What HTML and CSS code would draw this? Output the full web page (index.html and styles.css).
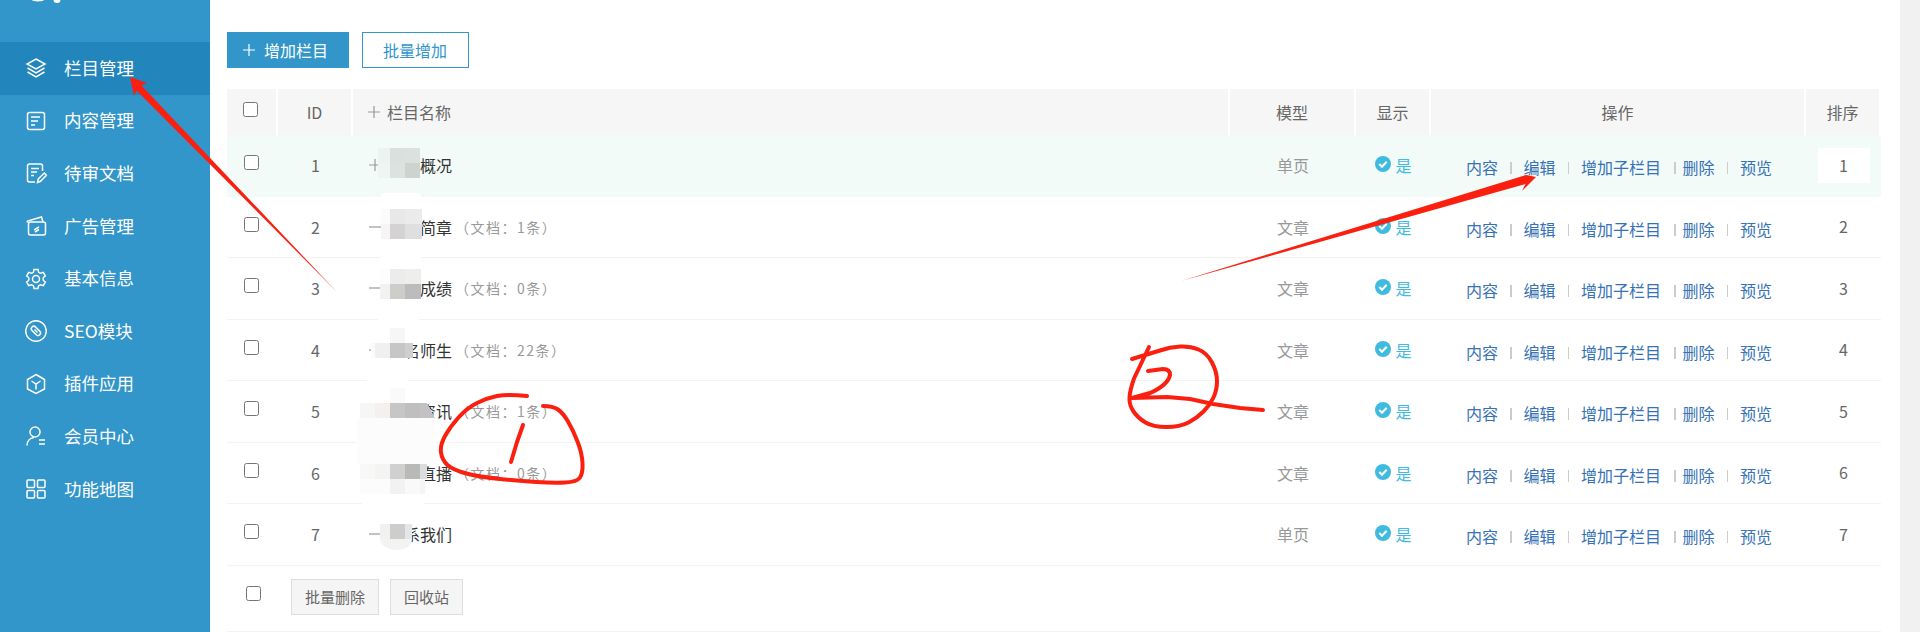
FILE: index.html
```html
<!DOCTYPE html>
<html lang="zh-CN">

<head>
  <meta charset="UTF-8">
  <title>栏目管理</title>
  <link rel="stylesheet" href="styles.css">
</head>

<body>
  <div class="page">
    <aside class="sidebar">
      <a class="nav-item active" href="#">
        <svg class="nav-icon" viewBox="0 0 22 22"><path d="M11 2l9 5-9 5-9-5z"/><path d="M2.5 11l8.500 4.800 8.500-4.800"/><path d="M2.500 15l8.500 4.800 8.500-4.800"/></svg>
        <span>栏目管理</span>
      </a>
      <a class="nav-item" href="#">
        <svg class="nav-icon" viewBox="0 0 22 22"><rect x="2.500" y="2.500" width="17" height="17" rx="2"/><path d="M6 7h9M6 11h7M6 15h4"/></svg>
        <span>内容管理</span>
      </a>
      <a class="nav-item" href="#">
        <svg class="nav-icon" viewBox="0 0 22 22"><path d="M10 20H4.500a2 2 0 0 1-2-2V4a2 2 0 0 1 2-2h11a2 2 0 0 1 2 2v5"/><path d="M6 6.500h8M6 10h6M6 13.500h3"/><path d="M12.500 20.500l.8-3.500 6-6 2.200 2.300-6 6z"/></svg>
        <span>待审文档</span>
      </a>
      <a class="nav-item" href="#">
        <svg class="nav-icon" viewBox="0 0 22 22"><rect x="3.500" y="7" width="17" height="13" rx="2"/><path d="M2 7.500L2.500 6 16.500 2l1.500 5"/><path d="M9 15l5-3M10 17l4-2.500"/></svg>
        <span>广告管理</span>
      </a>
      <a class="nav-item" href="#">
        <svg class="nav-icon" viewBox="0 0 22 22"><path d="M9 1.500h4l.6 2.800 2 1 2.700-.9 2 3.500-2.100 1.900v2.400l2.100 1.900-2 3.500-2.700-.9-2 1-.6 2.800H9l-.6-2.800-2-1-2.700.9-2-3.500 2.100-1.900V9.800L1.700 7.900l2-3.500 2.700.9 2-1z"/><circle cx="11" cy="11" r="3.500"/></svg>
        <span>基本信息</span>
      </a>
      <a class="nav-item" href="#">
        <svg class="nav-icon" viewBox="0 0 22 22"><circle cx="11" cy="11" r="10.300"/><path d="M7 7a2.500 2.500 0 0 1 3.500 0l4.500 4.500a2.500 2.500 0 0 1-3.500 3.500L7 10.500a2.500 2.500 0 0 1 0-3.500z"/><path d="M9.500 9.500l3 3"/></svg>
        <span>SEO模块</span>
      </a>
      <a class="nav-item" href="#">
        <svg class="nav-icon" viewBox="0 0 22 22"><path d="M11 1.500l8.500 5v9.500L11 20.500 2.500 16V6.500z"/><path d="M6.500 8l4.500 3 4.500-3M11 11v5.500"/></svg>
        <span>插件应用</span>
      </a>
      <a class="nav-item" href="#">
        <svg class="nav-icon" viewBox="0 0 22 22"><circle cx="10" cy="7" r="5"/><path d="M2 20.500c0-4.500 3-7.500 7-8"/><path d="M14 15h6M14 19h6"/></svg>
        <span>会员中心</span>
      </a>
      <a class="nav-item" href="#">
        <svg class="nav-icon" viewBox="0 0 22 22"><rect x="2" y="2" width="7.500" height="7.500" rx="1"/><rect x="12.500" y="2" width="7.500" height="7.500" rx="1"/><rect x="2" y="12.500" width="7.500" height="7.500" rx="1"/><rect x="12.500" y="12.500" width="7.500" height="7.500" rx="1"/></svg>
        <span>功能地图</span>
      </a>
    </aside>

    <main class="main">
      <div class="toolbar">
        <a class="btn btn-primary" href="#">
          <svg class="mark" viewBox="0 0 12 12"><path d="M0 6h12M6 0v12"/></svg>
          <span>增加栏目</span>
        </a>
        <a class="btn btn-outline" href="#">批量增加</a>
      </div>

      <table class="cat-table">
        <colgroup>
          <col class="col-check">
          <col class="col-id">
          <col>
          <col class="col-model">
          <col class="col-show">
          <col class="col-action">
          <col class="col-sort">
        </colgroup>
        <thead>
          <tr>
            <th><input class="head-check" type="checkbox"></th>
            <th>ID</th>
            <th class="name-head"><div class="name-cell"><svg class="mark" viewBox="0 0 12 12"><path d="M0 6h12M6 0v12"/></svg><span class="name-head-text">栏目名称</span></div></th>
            <th>模型</th>
            <th>显示</th>
            <th>操作</th>
            <th>排序</th>
          </tr>
        </thead>
        <tbody>
          <tr class="current">
            <td><input type="checkbox"></td>
            <td>1</td>
            <td class="name"><div class="name-cell"><svg class="mark" viewBox="0 0 12 12"><path d="M0 6h12M6 0v12"/></svg><span class="title">概况</span></div></td>
            <td class="model">单页</td>
            <td><span class="show"><svg class="check" viewBox="0 0 16 16"><circle cx="8" cy="8" r="8"/><path d="M4.300 8l2.700 2.800 4.700-5"/></svg>是</span></td>
            <td class="actions"><a href="#">内容</a><i class="sep"></i><a href="#">编辑</a><i class="sep"></i><a href="#">增加子栏目</a><i class="sep sep-tight"></i><a href="#">删除</a><i class="sep"></i><a href="#">预览</a></td>
            <td><span class="sort">1</span></td>
          </tr>
          <tr>
            <td><input type="checkbox"></td>
            <td>2</td>
            <td class="name"><div class="name-cell"><svg class="mark" viewBox="0 0 12 12"><path d="M0 6h12"/></svg><span class="title">简章</span><span class="count">（文档：1条）</span></div></td>
            <td class="model">文章</td>
            <td><span class="show"><svg class="check" viewBox="0 0 16 16"><circle cx="8" cy="8" r="8"/><path d="M4.300 8l2.700 2.800 4.700-5"/></svg>是</span></td>
            <td class="actions"><a href="#">内容</a><i class="sep"></i><a href="#">编辑</a><i class="sep"></i><a href="#">增加子栏目</a><i class="sep sep-tight"></i><a href="#">删除</a><i class="sep"></i><a href="#">预览</a></td>
            <td><span class="sort">2</span></td>
          </tr>
          <tr>
            <td><input type="checkbox"></td>
            <td>3</td>
            <td class="name"><div class="name-cell"><svg class="mark" viewBox="0 0 12 12"><path d="M0 6h12"/></svg><span class="title">成绩</span><span class="count">（文档：0条）</span></div></td>
            <td class="model">文章</td>
            <td><span class="show"><svg class="check" viewBox="0 0 16 16"><circle cx="8" cy="8" r="8"/><path d="M4.300 8l2.700 2.800 4.700-5"/></svg>是</span></td>
            <td class="actions"><a href="#">内容</a><i class="sep"></i><a href="#">编辑</a><i class="sep"></i><a href="#">增加子栏目</a><i class="sep sep-tight"></i><a href="#">删除</a><i class="sep"></i><a href="#">预览</a></td>
            <td><span class="sort">3</span></td>
          </tr>
          <tr>
            <td><input type="checkbox"></td>
            <td>4</td>
            <td class="name"><div class="name-cell"><svg class="mark" viewBox="0 0 12 12"><path d="M0 6h12"/></svg><span class="title">名师生</span><span class="count">（文档：22条）</span></div></td>
            <td class="model">文章</td>
            <td><span class="show"><svg class="check" viewBox="0 0 16 16"><circle cx="8" cy="8" r="8"/><path d="M4.300 8l2.700 2.800 4.700-5"/></svg>是</span></td>
            <td class="actions"><a href="#">内容</a><i class="sep"></i><a href="#">编辑</a><i class="sep"></i><a href="#">增加子栏目</a><i class="sep sep-tight"></i><a href="#">删除</a><i class="sep"></i><a href="#">预览</a></td>
            <td><span class="sort">4</span></td>
          </tr>
          <tr>
            <td><input type="checkbox"></td>
            <td>5</td>
            <td class="name"><div class="name-cell"><svg class="mark" viewBox="0 0 12 12"><path d="M0 6h12"/></svg><span class="title">资讯</span><span class="count">（文档：1条）</span></div></td>
            <td class="model">文章</td>
            <td><span class="show"><svg class="check" viewBox="0 0 16 16"><circle cx="8" cy="8" r="8"/><path d="M4.300 8l2.700 2.800 4.700-5"/></svg>是</span></td>
            <td class="actions"><a href="#">内容</a><i class="sep"></i><a href="#">编辑</a><i class="sep"></i><a href="#">增加子栏目</a><i class="sep sep-tight"></i><a href="#">删除</a><i class="sep"></i><a href="#">预览</a></td>
            <td><span class="sort">5</span></td>
          </tr>
          <tr>
            <td><input type="checkbox"></td>
            <td>6</td>
            <td class="name"><div class="name-cell"><svg class="mark" viewBox="0 0 12 12"><path d="M0 6h12"/></svg><span class="title">直播</span><span class="count">（文档：0条）</span></div></td>
            <td class="model">文章</td>
            <td><span class="show"><svg class="check" viewBox="0 0 16 16"><circle cx="8" cy="8" r="8"/><path d="M4.300 8l2.700 2.800 4.700-5"/></svg>是</span></td>
            <td class="actions"><a href="#">内容</a><i class="sep"></i><a href="#">编辑</a><i class="sep"></i><a href="#">增加子栏目</a><i class="sep sep-tight"></i><a href="#">删除</a><i class="sep"></i><a href="#">预览</a></td>
            <td><span class="sort">6</span></td>
          </tr>
          <tr>
            <td><input type="checkbox"></td>
            <td>7</td>
            <td class="name"><div class="name-cell"><svg class="mark" viewBox="0 0 12 12"><path d="M0 6h12"/></svg><span class="title">系我们</span></div></td>
            <td class="model">单页</td>
            <td><span class="show"><svg class="check" viewBox="0 0 16 16"><circle cx="8" cy="8" r="8"/><path d="M4.300 8l2.700 2.800 4.700-5"/></svg>是</span></td>
            <td class="actions"><a href="#">内容</a><i class="sep"></i><a href="#">编辑</a><i class="sep"></i><a href="#">增加子栏目</a><i class="sep sep-tight"></i><a href="#">删除</a><i class="sep"></i><a href="#">预览</a></td>
            <td><span class="sort">7</span></td>
          </tr>
        </tbody>
      </table>

      <div class="table-foot">
        <input type="checkbox">
        <a class="btn-gray" href="#">批量删除</a>
        <a class="btn-gray" href="#">回收站</a>
      </div>
    </main>

    <div class="scroll-track"></div>
  </div>

  <!-- mosaic and red pen marks drawn on top of the screenshot -->
  <svg class="overlay" width="1920" height="632" viewBox="0 0 1920 632">
    <g class="logo-scrap">
      <ellipse cx="38" cy="0" rx="6" ry="1.500"/>
      <ellipse cx="57" cy="0" rx="3.500" ry="3"/>
    </g>
    <g>
      <rect x="378" y="148" width="12" height="15" fill="#ecf4f2"/>
      <rect x="390" y="148" width="15" height="15" fill="#d9e0de"/>
      <rect x="405" y="148" width="15" height="15" fill="#dae1df"/>
      <rect x="378" y="163" width="12" height="15" fill="#eff5f3"/>
      <rect x="390" y="163" width="15" height="15" fill="#dbe3e1"/>
      <rect x="405" y="163" width="15" height="15" fill="#cdd4d0"/>

      <rect x="381" y="193" width="40" height="16" fill="#fff"/>
      <rect x="381" y="209" width="9" height="15" fill="#fcfbfa"/>
      <rect x="390" y="209" width="15" height="15" fill="#e9e8e8"/>
      <rect x="405" y="209" width="17" height="15" fill="#ebebeb"/>
      <rect x="381" y="224" width="9" height="15" fill="#f6f5f3"/>
      <rect x="390" y="224" width="15" height="15" fill="#d4d2d3"/>
      <rect x="405" y="224" width="17" height="15" fill="#dfdfe0"/>

      <rect x="381" y="254" width="40" height="15" fill="#fff"/>
      <rect x="380" y="269" width="10" height="15" fill="#fdfdfd"/>
      <rect x="390" y="269" width="15" height="15" fill="#ececec"/>
      <rect x="405" y="269" width="16" height="15" fill="#eeeeec"/>
      <rect x="380" y="284" width="10" height="15" fill="#f2f2f2"/>
      <rect x="390" y="284" width="15" height="15" fill="#cdcdc9"/>
      <rect x="405" y="284" width="16" height="15" fill="#bcbcbe"/>

      <rect x="378" y="315" width="41" height="13" fill="#fff"/>
      <rect x="390" y="328" width="15" height="15" fill="#f6f6f6"/>
      <rect x="375" y="328" width="15" height="15" fill="#fff"/>
      <rect x="405" y="328" width="8" height="15" fill="#fff"/>
      <rect x="371" y="343" width="4" height="15" fill="#fbfbfb"/>
      <rect x="375" y="343" width="15" height="15" fill="#f2f0ee"/>
      <rect x="390" y="343" width="15" height="15" fill="#c6c6c6"/>
      <rect x="405" y="343" width="8" height="15" fill="#cfcfcf"/>

      <rect x="367" y="373" width="41" height="30" fill="#fff"/>
      <rect x="390" y="388" width="15" height="15" fill="#fafafa"/>
      <rect x="360" y="403" width="15" height="15" fill="#f6f6f4"/>
      <rect x="375" y="403" width="15" height="15" fill="#f4f0ee"/>
      <rect x="390" y="403" width="15" height="15" fill="#c6c6c6"/>
      <rect x="405" y="403" width="15" height="15" fill="#bfbfbf"/>
      <path d="M420 403h7l8 15h-15z" fill="#c3c1c3"/>

      <rect x="357" y="418" width="78" height="46" fill="#fcfcfc"/>
      <rect x="360" y="464" width="15" height="15" fill="#f8f8f8"/>
      <rect x="375" y="464" width="15" height="15" fill="#f4f4f2"/>
      <rect x="390" y="464" width="15" height="15" fill="#cfd0cf"/>
      <rect x="405" y="464" width="15" height="15" fill="#b9b9b7"/>
      <rect x="420" y="464" width="7" height="15" fill="#dcdcdc"/>
      <rect x="360" y="479" width="30" height="15" fill="#fcfcfc"/>
      <rect x="390" y="479" width="15" height="15" fill="#f2f2f2"/>
      <rect x="405" y="479" width="15" height="15" fill="#f9f9f9"/>
      <rect x="420" y="479" width="5" height="15" fill="#f5f5f5"/>
      <rect x="362" y="494" width="62" height="14" fill="#fff"/>

      <rect x="380" y="524" width="10" height="15" fill="#f1f1ef"/>
      <rect x="390" y="524" width="15" height="15" fill="#cdcdcd"/>
      <rect x="405" y="524" width="7" height="15" fill="#e6e6e6"/>
      <path d="M380 539h32c0 7-7 11-15 11s-17-4-17-11z" fill="#f3f3f1"/>
    </g>
    <g class="pen-fill">
      <path d="M130 77l17 6-5.500 2.500L337 292 136.500 90.500 134 96z"/>
      <path d="M1181 281l345-106-9-2 19 4-14 14 3.500-7z"/>
    </g>
    <g class="pen">
      <path d="M527 396Q507 394 497 396Q487 398 477 403Q467 408 458.500 417.500Q450 427 445 436Q440 445 441 452.500Q442 460 447.500 465Q453 470 466.500 473.500Q480 477 500 479Q520 481 536.500 482Q553 483 565 482.500Q577 482 580 477.500Q583 473 582.500 463Q582 453 577.500 441.500Q573 430 568 421.500Q563 413 558 409.500Q553 406 543 406"/>
      <path d="M523 425l-6 17-6 20"/>
      <path d="M1132 359L1160 350.500Q1170 347 1180 346.500Q1190 346 1198.500 349.500Q1207 353 1212 362.500Q1217 372 1217 381Q1217 390 1213.500 397.500Q1210 405 1203.500 411.500Q1197 418 1188.500 422.500Q1180 427 1166.500 427Q1153 427 1145.500 422.500Q1138 418 1133.500 411.500Q1129 405 1129.500 397.500Q1130 390 1134 378.500L1149 347"/>
      <path d="M1148 371l15-2Q1170 369 1170 375Q1168 385 1150 393l-18 5 35-1 23 2 23 5 27 4 23 2"/>
    </g>
  </svg>
</body>

</html>
```

FILE: styles.css
```css
* {
  padding: 0;
  margin: 0;
  box-sizing: border-box;
}

body {
  height: 632px;
  overflow: hidden;
  position: relative;
  background-color: #fff;
  font-family: "Noto Sans CJK SC", "Liberation Sans", sans-serif;
  font-size: 16px;
  color: #666;
}

a {
  text-decoration: none;
}

.page {
  display: flex;
  height: 632px;
}

/* 左侧菜单 */
.sidebar {
  width: 210px;
  flex-shrink: 0;
  padding-top: 42px;
  background-color: #3296ca;
}

.nav-item {
  height: 52.6px;
  padding-left: 25px;
  display: flex;
  align-items: center;
  color: #fff;
  font-size: 17.5px;
}

.nav-item span {
  padding-bottom: 2px;
}

.nav-item.active {
  background-color: #2285bb;
}

.nav-icon {
  width: 22px;
  height: 22px;
  margin-right: 17px;
  fill: none;
  stroke: #fff;
  stroke-width: 1.5;
}

/* 主体 */
.main {
  flex: 1;
  padding: 32px 19px 0 17px;
}

.scroll-track {
  width: 20px;
  flex-shrink: 0;
  background-color: #f1f1f1;
}

.toolbar {
  display: flex;
  gap: 13px;
  margin-bottom: 21px;
}

.btn {
  height: 36px;
  display: flex;
  align-items: center;
}

.btn-primary {
  width: 122px;
  padding-left: 16px;
  background-color: #3296ca;
  color: #fff;
}

.btn-primary .mark {
  stroke: #fff;
  margin-right: 9px;
}

.btn-outline {
  width: 107px;
  padding-left: 20px;
  border: 1px solid #3296ca;
  color: #3296ca;
}

.mark {
  width: 12px;
  height: 12px;
  flex-shrink: 0;
  fill: none;
  stroke: #999;
  stroke-width: 1.2;
}

/* 表格 */
.cat-table {
  width: 1654px;
  table-layout: fixed;
  border-collapse: separate;
  border-spacing: 0;
}

.col-check {
  width: 51px;
}

.col-id {
  width: 75px;
}

.col-model {
  width: 126px;
}

.col-show {
  width: 75px;
}

.col-action {
  width: 375px;
}

.col-sort {
  width: 75px;
}

.cat-table th {
  height: 46px;
  background-color: #f6f6f6;
  border-right: 2px solid #fff;
  font-weight: normal;
  color: #666;
}

.cat-table td {
  height: 61.5px;
  border-bottom: 1px solid #f3f3f3;
  text-align: center;
}

.cat-table input {
  display: block;
  width: 15px;
  height: 15px;
  margin: 0 0 5px 17px;
}

.cat-table .head-check {
  margin-left: 16px;
}

.current td {
  background-color: #f3fbf8;
  border-bottom-color: #f3fbf8;
}

.name-head {
  padding-left: 15px;
}

.cat-table .name {
  padding-left: 16px;
}

.name-cell {
  display: flex;
  align-items: center;
  text-align: left;
}

.name-head-text {
  margin-left: 7px;
}

.title {
  width: 64px;
  margin-left: 7px;
  text-align: right;
  color: #333;
}

.count {
  margin-left: 3px;
  font-size: 14px;
  letter-spacing: 1.5px;
  color: #999;
}

.cat-table .model {
  color: #999;
}

.show {
  display: inline-flex;
  align-items: center;
  gap: 4px;
  color: #3fbbe0;
}

.check {
  width: 16px;
  height: 16px;
  margin-top: -2px;
}

.check circle {
  fill: #3fbbe0;
}

.check path {
  fill: none;
  stroke: #fff;
  stroke-width: 2;
}

.cat-table .actions {
  padding: 4px 0 0 35px;
  text-align: left;
  white-space: nowrap;
}

.actions a {
  color: #3672b5;
}

.sep {
  display: inline-block;
  width: 1.5px;
  height: 12px;
  margin: 0 12px;
  background-color: #ccc;
}

.sep-tight {
  margin: 0 7px 0 13px;
}

.sort {
  display: inline-block;
  width: 52px;
  height: 35px;
  line-height: 35px;
}

.current .sort {
  background-color: #fff;
}

.table-foot {
  height: 66px;
  padding: 13px 0 0 19px;
  display: flex;
  align-items: flex-start;
  border-bottom: 1px solid #f3f3f3;
}

.table-foot input {
  width: 15px;
  height: 15px;
  margin: 7px 30px 0 0;
}

.btn-gray {
  height: 36px;
  line-height: 34px;
  padding: 0 13px;
  margin-right: 11px;
  background-color: #f5f5f5;
  border: 1px solid #ddd;
  font-size: 15px;
  color: #666;
}

/* 覆盖层 */
.overlay {
  position: absolute;
  left: 0;
  top: 0;
  pointer-events: none;
}

.logo-scrap {
  fill: #fff;
}

.pen-fill {
  fill: #fb1f10;
}

.pen {
  fill: none;
  stroke: #fb1f10;
  stroke-width: 4;
  stroke-linecap: round;
  stroke-linejoin: round;
}
```
